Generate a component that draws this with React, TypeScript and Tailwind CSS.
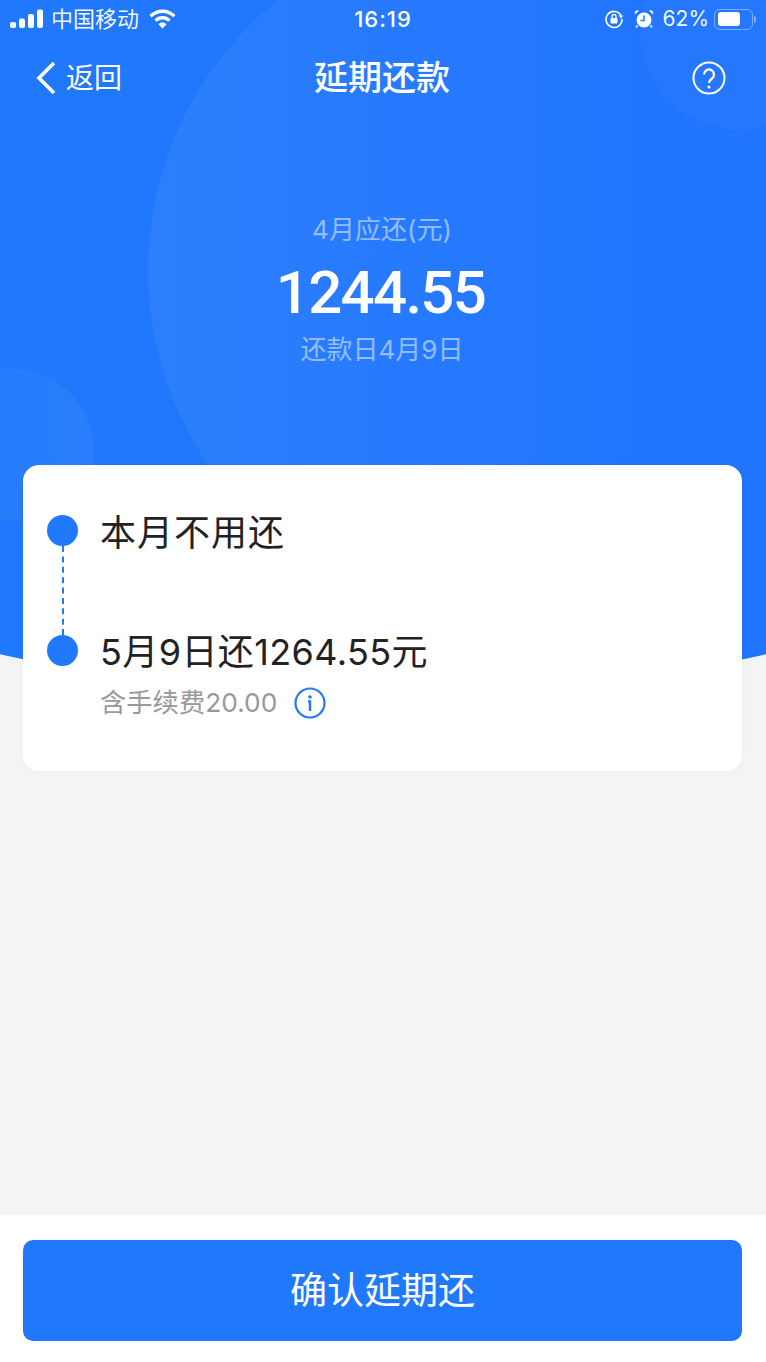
import React from "react";

const cjk = { fontFamily: '"Inter", "Noto Sans CJK SC", sans-serif' };

const StatusBar = () => (
  <div className="flex h-[38px] items-center justify-between pl-[10px] pr-[10px] text-white">
    <div className="flex items-center">
      <svg width="33" height="20" viewBox="0 0 33 20" fill="white">
        <rect x="0" y="13" width="6" height="6" rx="2" />
        <rect x="9" y="9.5" width="6" height="9.5" rx="2" />
        <rect x="18" y="5" width="6" height="14" rx="2" />
        <rect x="27" y="0.5" width="6" height="18.5" rx="2" />
      </svg>
      <span className="ml-[8px] text-[22px] leading-[26px] text-white/95">中国移动</span>
      <svg className="ml-[10px]" width="27" height="20" viewBox="0 0 27 20" fill="white">
        <path d="M13.5 0.5C8.5 0.5 4 2.5 0.5 6l2.2 2.4c2.9-2.8 6.700-4.500 10.800-4.500s7.900 1.700 10.800 4.500L26.500 6C23 2.500 18.500 0.500 13.500 0.500z" />
        <path d="M13.5 7c-3.200 0-6 1.200-8.200 3.400l2.300 2.400c1.500-1.500 3.600-2.400 5.900-2.400s4.400 0.900 5.900 2.400l2.300-2.400C19.500 8.200 16.700 7 13.500 7z" />
        <path d="M13.500 13.500c-1.600 0-3 0.600-4 1.700l4 4.300 4-4.300c-1-1.100-2.400-1.700-4-1.700z" />
      </svg>
    </div>
    <span className="absolute left-0 right-0 text-center text-[22px] font-medium leading-[26px] tracking-[1px]">16:19</span>
    <div className="flex items-center">
      <svg width="20" height="20" viewBox="0 0 20 20" fill="none">
        <path d="M17 6.500A8 8 0 1 0 18 10" stroke="white" strokeWidth="1.600" />
        <path d="M14.500 6.500h5l-2.500 3z" fill="white" />
        <rect x="6.500" y="9" width="7" height="5.500" rx="1" fill="white" />
        <path d="M8 9V7.500a2 2 0 0 1 4 0V9" stroke="white" strokeWidth="1.300" />
      </svg>
      <svg className="ml-[10px]" width="20" height="20" viewBox="0 0 20 20" fill="white">
        <circle cx="10" cy="11" r="7.500" />
        <path d="M1 5.500 5 1.500a3 3 0 0 0-4 4zM19 5.500l-4-4a3 3 0 0 1 4 4z" />
        <path d="M3.500 16.500l-1.500 2M16.500 16.500l1.500 2" stroke="white" strokeWidth="1.500" />
        <path d="M10 6.500V11.500H6.500" stroke="#2479fb" strokeWidth="1.500" fill="none" />
      </svg>
      <span className="ml-[9px] text-[21px] leading-[26px] text-white/95">62%</span>
      <div className="ml-[5px] flex items-center">
        <div className="flex h-[21px] w-[39px] items-center rounded-[6px] border border-white/40 p-[2.500px]">
          <div className="h-[14px] w-[22px] rounded-[3px] bg-white" />
        </div>
        <div className="ml-[1px] h-[7px] w-[2px] rounded-r-full bg-white/40" />
      </div>
    </div>
  </div>
);

const App = () => {
  return (
    <div className="relative flex h-[1362px] w-[766px] flex-col overflow-hidden bg-[#f3f4f6]" style={cjk}>
      {/* blue header background */}
      <div className="absolute left-[-117px] top-0 h-[689px] w-[1000px] overflow-hidden rounded-bl-[500px_97px] rounded-br-[500px_97px] bg-gradient-to-r from-[#2079fb] to-[#2073fe]">
        <div className="absolute left-[265px] top-[-75px] h-[690px] w-[690px] rounded-full bg-gradient-to-r from-[#3d88fc]/45 to-[#2079fb]/0 to-[75%]" />
        <div className="absolute left-[43px] top-[368px] h-[152px] w-[168px] overflow-hidden">
          <div className="h-[168px] w-[168px] rounded-full bg-gradient-to-r from-[#2f82fb]/15 to-[#3a89fc]/40" />
        </div>
        <div className="absolute left-[757px] top-[-70px] h-[200px] w-[200px] rounded-full bg-white/[0.025]" />
      </div>

      <div className="relative flex flex-1 flex-col">
        <StatusBar />

        {/* nav */}
        <div className="relative flex h-[80px] items-center justify-between pl-[35px] pr-[40px] text-white">
          <div className="flex items-center">
            <svg width="22" height="34" viewBox="0 0 22 34" fill="none" stroke="white" strokeWidth="3.600">
              <path d="M19 2 4 17l15 15" />
            </svg>
            <span className="ml-[9px] text-[28px] leading-[36px]">返回</span>
          </div>
          <span className="absolute left-0 right-[2px] text-center text-[34px] font-medium leading-[40px]">延期还款</span>
          <svg width="34" height="34" viewBox="0 0 34 34" fill="none" stroke="white">
            <circle cx="17" cy="17" r="15.500" strokeWidth="2" />
            <path d="M12 13.500a5 5 0 1 1 8 4c-2 1.500-3 2.300-3 4.500" strokeWidth="2.200" />
            <circle cx="17" cy="26" r="1.500" fill="white" stroke="none" />
          </svg>
        </div>

        {/* amount */}
        <div className="mt-[90px] flex flex-col items-center">
          <span className="mr-[2px] text-[26px] leading-[44px] text-white/50">4月应还(元)</span>
          <span className="mr-[5px] mt-[7px] text-[60px] font-medium leading-[68px] tracking-[-1.700px] text-white" style={{ fontFamily: "Roboto, sans-serif" }}>
            1244.55
          </span>
          <span className="mr-[2px] mt-[6px] text-[26px] leading-[34px] text-white/50">还款日4月9日</span>
        </div>

        {/* plan card */}
        <div className="ml-[23px] mr-[24px] mt-[98px] flex h-[306px] rounded-[16px] bg-white pl-[24px] pt-[50px] shadow-[0_2px_10px_rgba(0,0,0,0.02)]">
          <div className="flex w-[31px] flex-col items-center">
            <div className="h-[31px] w-[31px] rounded-full bg-[#2079fb]" />
            <div className="h-[89px] border-l-2 border-dashed border-[#2079fb]" />
            <div className="h-[31px] w-[31px] rounded-full bg-[#2079fb]" />
          </div>
          <div className="ml-[22px] flex flex-col">
            <span className="mt-[-2px] text-[36px] leading-[40px] tracking-[1px] text-[#222222]">本月不用还</span>
            <span className="mt-[79px] text-[36px] leading-[40px] tracking-[0.4px] text-[#222222]">5月9日还1264.55元</span>
            <div className="mt-[13px] flex items-center">
              <span className="text-[26.300px] leading-[36px] text-[#999999]">含手续费20.00</span>
              <svg className="ml-[17px]" width="32" height="32" viewBox="0 0 32 32" fill="none" stroke="#2079fb">
                <circle cx="16" cy="16" r="14.500" strokeWidth="2.200" />
                <circle cx="16" cy="10" r="1.800" fill="#2079fb" stroke="none" />
                <path d="M14 14.500h2V24" strokeWidth="2.400" />
              </svg>
            </div>
          </div>
        </div>
      </div>

      {/* footer */}
      <div className="relative flex h-[147px] bg-white pl-[23px] pr-[24px] pt-[25px]">
        <button className="flex h-[101px] w-full items-center justify-center rounded-[10px] bg-[#2079fb] text-[37px] text-white">
          确认延期还
        </button>
      </div>
    </div>
  );
};

export default App;
